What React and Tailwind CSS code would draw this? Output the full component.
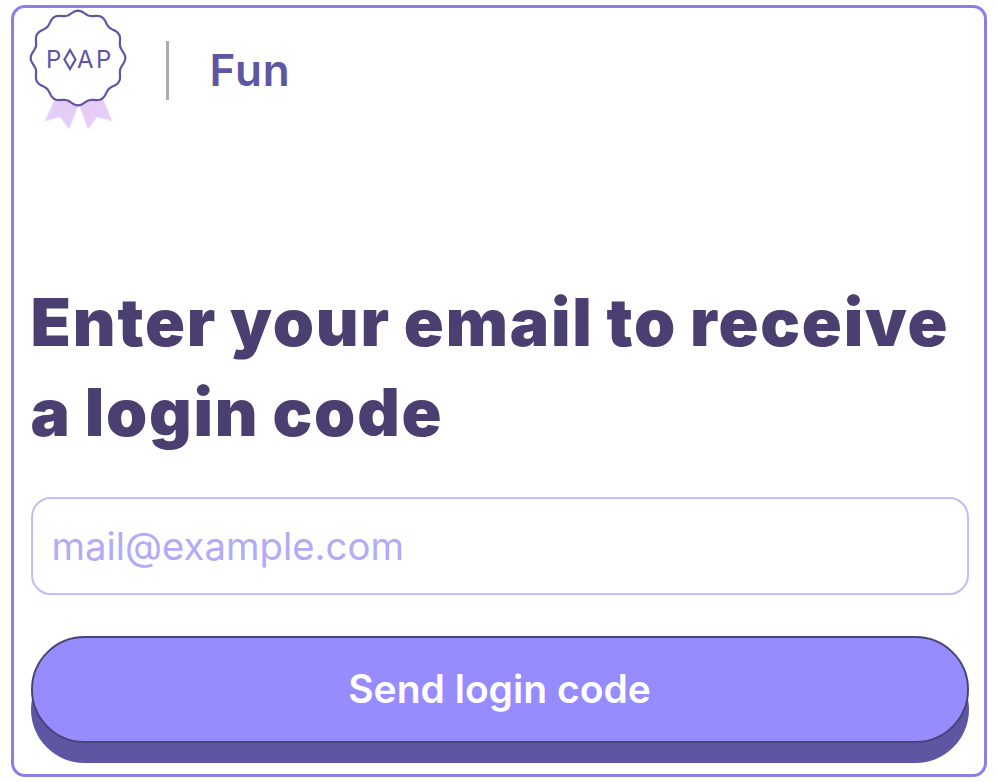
import React from 'react';

// wavy seal outline for the logo
const sealPath = (() => {
  const pts = [];
  for (let i = 0; i < 240; i++) {
    const a = (i / 240) * Math.PI * 2;
    const r = 45.5 + 1.8 * Math.cos(12 * a);
    pts.push(`${(50 + r * Math.sin(a)).toFixed(2)},${(50 - r * Math.cos(a)).toFixed(2)}`);
  }
  return `M${pts.join('L')}Z`;
})();

const PoapLogo = () => (
  <svg width="100" height="122" viewBox="0 0 100 122" className="block shrink-0">
    <path d="M29 86 L17 113 L32 109 L41 121 L51 96Z" fill="#e6cdf7" stroke="#f1e2fb" strokeWidth="1" />
    <path d="M51 96 L60 121 L69 109 L84 113 L73 86Z" fill="#e6cdf7" stroke="#f1e2fb" strokeWidth="1" />
    <path d={sealPath} fill="#ffffff" stroke="#5e56a2" strokeWidth="2.2" />
    <g fill="#5e56a2" fontFamily="Inter, sans-serif" fontSize="24" fontWeight="400">
      <text x="18" y="60">P</text>
      <text x="49" y="60">A</text>
      <text x="68" y="60">P</text>
    </g>
    <polygon points="42,42 47.5,51.5 42,61 36.5,51.5" fill="none" stroke="#5e56a2" strokeWidth="2.2" />
  </svg>
);

export default function App() {
  return (
    <div className="w-[998px] h-[782px] bg-white pt-[5px] px-[11px] font-['Inter',sans-serif]">
      <div className="h-[772px] border-[3.5px] border-[#8a80e8] rounded-[14px] px-[16.5px]">
        {/* header */}
        <div className="flex items-start h-[126.5px]">
          <div className="-ml-[3px]">
            <PoapLogo />
          </div>
          <div className="w-[3px] h-[59px] bg-[#acacac] ml-[38px] mt-[33px]" />
          <div className="ml-[41px] mt-[34px] text-[44px] leading-[56px] font-semibold tracking-[1px] text-[#5e56a2]">Fun</div>
        </div>

        <h1 className="mt-[142px] text-[66px] leading-[90px] font-black text-[#4a3f70] tracking-[1.8px] [word-spacing:-2px] whitespace-nowrap">
          Enter your email to receive
          <br />
          a login code
        </h1>

        <input
          type="text"
          placeholder="mail@example.com"
          className="block mt-[40px] w-[938px] h-[98px] px-[19px] border-2 border-[#c5bcf5] rounded-[20px] text-[38.3px] text-[#463d73] placeholder:text-[#b3aaf8] outline-none bg-white"
        />

        <button className="block mt-[41px] w-[938px] h-[107px] rounded-[54px] bg-[#968cff] border-2 border-[#4a4378] shadow-[0_20px_0_#5e56a2] text-white text-[39px] font-semibold">
          Send login code
        </button>
      </div>
    </div>
  );
}
